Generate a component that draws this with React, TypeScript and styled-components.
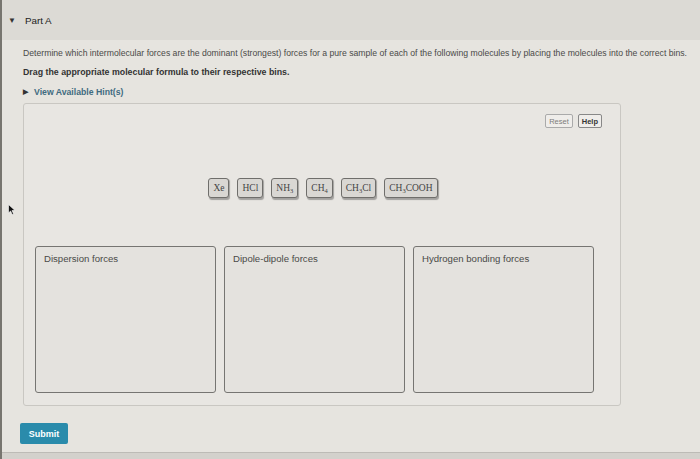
import styled, { createGlobalStyle } from "styled-components";

const GlobalStyle = createGlobalStyle`
  html, body {
    margin: 0;
    padding: 0;
    background: #e5e3de;
    font-family: "Liberation Sans", Arial, sans-serif;
  }
  * { box-sizing: border-box; }
`;

const Screen = styled.div`
  position: relative;
  width: 700px;
  height: 459px;
  display: flex;
  flex-direction: column;
  border-left: 2px solid #77756f;
  overflow: hidden;
`;

const Main = styled.div`
  flex: 1;
  display: flex;
  flex-direction: column;
  background: #e6e4df;
`;

const BottomEdge = styled.div`
  height: 7px;
  border-top: 1px solid #bdbbb6;
  background: #d3d1cc;
`;

const Header = styled.div`
  height: 40px;
  display: flex;
  align-items: center;
  gap: 9px;
  padding-left: 6px;
  background: #dcdad5;
  color: #222;
  font-size: 9.8px;
`;

const Caret = styled.span`
  font-size: 8px;
  color: #333;
`;

const Body = styled.div`
  display: flex;
  flex-direction: column;
  padding-left: 21px;
`;

const Prompt = styled.p<{ $bold?: boolean }>`
  margin: 7px 0 0;
  font-size: ${(p) => (p.$bold ? "8.8px" : "8.66px")};
  line-height: 12px;
  color: ${(p) => (p.$bold ? "#333" : "#4a4a48")};
  font-weight: ${(p) => (p.$bold ? 700 : 400)};
  white-space: nowrap;
`;

const Hint = styled.div`
  margin-top: 8px;
  display: flex;
  align-items: center;
  gap: 6px;
  height: 12px;
  font-size: 8.7px;
  font-weight: 700;
  color: #3f6b80;
`;

const HintArrow = styled.span`
  font-size: 6.5px;
  color: #333;
`;

const Panel = styled.div`
  margin-top: 5px;
  width: 598px;
  height: 303px;
  border: 1px solid #c9c7c2;
  border-radius: 3px;
  background: #e8e6e2;
  display: flex;
  flex-direction: column;
  padding: 10px 18px 12px 11px;
`;

const Toolbar = styled.div`
  display: flex;
  justify-content: flex-end;
  gap: 5px;
`;

const ToolButton = styled.button<{ $strong?: boolean }>`
  height: 14px;
  padding: 0 3px;
  border: 1px solid ${(p) => (p.$strong ? "#888" : "#aaa")};
  border-radius: 2px;
  background: #efedea;
  font-family: "Liberation Sans", Arial, sans-serif;
  font-size: 7.5px;
  font-weight: ${(p) => (p.$strong ? 700 : 400)};
  color: ${(p) => (p.$strong ? "#333" : "#7d7d7a")};
`;

const ChipRow = styled.div`
  margin-top: 50px;
  display: flex;
  justify-content: center;
  gap: 8px;
  padding-left: 9px;
`;

const Chip = styled.div`
  height: 20px;
  padding: 0 4px;
  display: flex;
  align-items: center;
  border: 1.5px solid #6f6e6b;
  border-radius: 3px;
  background: #d9d7d3;
  box-shadow: 1px 1.5px 1px rgba(0, 0, 0, 0.3);
  font-family: "Liberation Serif", "Times New Roman", serif;
  font-size: 9.5px;
  color: #444;
`;

const Sub = styled.span`
  font-size: 6.5px;
  position: relative;
  top: 2px;
`;

const Bins = styled.div`
  margin-top: 48px;
  display: flex;
  gap: 8px;
`;

const Bin = styled.div`
  width: 181px;
  height: 147px;
  border: 1.5px solid #767572;
  border-radius: 3px;
  background: #e4e2de;
  padding: 6px 8px;
  font-size: 9.6px;
  color: #4a4a48;
`;

const Submit = styled.button`
  margin: 17px 0 0 -3px;
  width: 48px;
  height: 21px;
  border: none;
  border-radius: 2px;
  background: #2a8bab;
  color: #fff;
  font-family: "Liberation Sans", Arial, sans-serif;
  font-size: 9px;
  font-weight: 700;
`;

const Cursor = styled.svg`
  position: absolute;
  left: 6px;
  top: 204px;
`;

const molecules: [string, string?, string?][] = [
  ["Xe"],
  ["HCl"],
  ["NH", "3"],
  ["CH", "4"],
  ["CH", "3", "Cl"],
  ["CH", "3", "COOH"],
];

const bins = ["Dispersion forces", "Dipole-dipole forces", "Hydrogen bonding forces"];

export default function App() {
  return (
    <>
      <GlobalStyle />
      <Screen>
        <Main>
          <Header>
            <Caret>▼</Caret>
            <span>Part A</span>
          </Header>
          <Body>
            <Prompt>
              Determine which intermolecular forces are the dominant (strongest) forces for a pure sample of each of
              the following molecules by placing the molecules into the correct bins.
            </Prompt>
            <Prompt $bold>Drag the appropriate molecular formula to their respective bins.</Prompt>
            <Hint>
              <HintArrow>▶</HintArrow>
              View Available Hint(s)
            </Hint>
            <Panel>
              <Toolbar>
                <ToolButton>Reset</ToolButton>
                <ToolButton $strong>Help</ToolButton>
              </Toolbar>
              <ChipRow>
                {molecules.map(([a, sub, rest]) => (
                  <Chip key={a + (sub ?? "") + (rest ?? "")}>
                    {a}
                    {sub && <Sub>{sub}</Sub>}
                    {rest}
                  </Chip>
                ))}
              </ChipRow>
              <Bins>
                {bins.map((b) => (
                  <Bin key={b}>{b}</Bin>
                ))}
              </Bins>
            </Panel>
            <Submit>Submit</Submit>
          </Body>
        </Main>
        <BottomEdge />
        <Cursor width="8" height="11" viewBox="0 0 8 11">
          <path d="M0.5 0.5 L0.5 9 L2.6 7 L4.2 10.5 L5.6 9.9 L4 6.5 L7 6.5 Z" fill="#111" stroke="#fff" strokeWidth="0.6" />
        </Cursor>
      </Screen>
    </>
  );
}
